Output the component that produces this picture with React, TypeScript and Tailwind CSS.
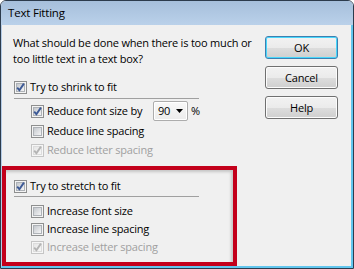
import React from "react";

type BoxProps = { checked?: boolean; disabled?: boolean };

// Win7-style checkbox, 13x13
function Box({ checked, disabled }: BoxProps) {
  return (
    <div
      className={`relative w-[13px] h-[13px] shrink-0 border p-px ${
        disabled ? "border-[#c5c5c5] bg-[#f6f6f6]" : "border-[#8e8f8f] bg-[#f4f4f4]"
      }`}
    >
      <div
        className={`w-full h-full border ${
          disabled
            ? "border-[#dcdcdc] bg-gradient-to-br from-[#e6e6e6] to-[#f7f7f7]"
            : "border-[#aeb2b7] bg-gradient-to-br from-[#c4c8cd] to-[#f5f5f6]"
        }`}
      />
      {checked && (
        <svg className="absolute -left-px -top-px" width="13" height="13" viewBox="0 0 13 13">
          <path
            d="M3.2 6.6 L5.4 9.2 L9.9 2.6"
            fill="none"
            stroke={disabled ? "#b4b4b4" : "#3d5a96"}
            strokeWidth="1.9"
          />
        </svg>
      )}
    </div>
  );
}

function Row({
  label,
  checked,
  disabled,
  className = "",
}: BoxProps & { label: string; className?: string }) {
  return (
    <div className={`flex items-center ${className}`}>
      <Box checked={checked} disabled={disabled} />
      <span className={`ml-[3px] ${disabled ? "text-[#a0a0a0]" : "text-black"}`}>{label}</span>
    </div>
  );
}

function Btn({ label, primary }: { label: string; primary?: boolean }) {
  return (
    <div
      className={`h-[23px] w-[73px] rounded-[3px] border flex items-center justify-center text-black ${
        primary
          ? "border-[#3c7fb1] shadow-[inset_0_0_0_1px_#48d7fb]"
          : "border-[#707070] shadow-[inset_0_0_0_1px_#fcfcfc]"
      } bg-[linear-gradient(#f2f2f2_0%,#ebebeb_50%,#dddddd_51%,#cfcfcf_100%)]`}
    >
      {label}
    </div>
  );
}

export default function App() {
  return (
    <div
      className="w-[354px] h-[269px] flex flex-col rounded-t-[6px] border border-[#2c3b4c] overflow-hidden text-[11px] leading-[16px] tracking-[-0.2px] whitespace-nowrap"
      style={{ fontFamily: '"Open Sans", "Noto Sans", sans-serif' }}
    >
      {/* title bar */}
      <div className="h-[24px] shrink-0 flex items-center pl-[7px] text-[11.5px] text-black bg-gradient-to-b from-[#a6bfdb] to-[#bad1ea]">
        Text Fitting
      </div>

      {/* client area */}
      <div className="flex-1 flex bg-[#f0f0f0] border-l border-l-[#b4cbe6] border-r-2 border-r-[#62c6ee] border-b-2 border-b-[#62c6ee]">
        {/* left column */}
        <div className="w-[235px] shrink-0 flex flex-col">
          <div className="mt-[10px] pl-[11px] text-black">
            What should be done when there is too much or
            <br />
            too little text in a text box?
          </div>

          <Row label="Try to shrink to fit" checked className="mt-[11px] h-[18px] pl-[12px]" />
          <div className="mt-[2px] ml-[12px] w-[185px] h-px bg-[#a0a0a0]" />

          <div className="mt-[2px] h-[20px] pl-[29px] flex items-center">
            <Box checked />
            <span className="ml-[3px] w-[106px] text-black">Reduce font size by</span>
            <div className="w-[35px] h-[20px] flex items-center rounded-[2px] border border-[#acacac] bg-gradient-to-b from-[#f8f8f8] to-[#ececec] shadow-[inset_0_0_0_1px_#ffffff]">
              <span className="pl-[4px] flex-1 text-black">90</span>
              <svg className="mr-[4px]" width="7" height="4" viewBox="0 0 7 4">
                <path d="M0 0 H7 L3.5 4 Z" fill="#000" />
              </svg>
            </div>
            <span className="ml-[3px] text-black">%</span>
          </div>
          <Row label="Reduce line spacing" className="mt-px h-[18px] pl-[29px]" />
          <Row label="Reduce letter spacing" checked disabled className="mt-px h-[18px] pl-[29px]" />

          {/* highlighted group */}
          <div className="mt-[7px] flex-1 flex flex-col border-4 border-[#c3001b] shadow-[inset_-2px_2px_3px_rgba(0,0,0,0.18)]">
            <Row label="Try to stretch to fit" checked className="mt-[7px] h-[18px] pl-[8px]" />
            <div className="mt-px ml-[8px] w-[185px] h-px bg-[#a0a0a0]" />
            <Row label="Increase font size" className="mt-[5px] h-[18px] pl-[25px]" />
            <Row label="Increase line spacing" className="h-[18px] pl-[25px]" />
            <Row label="Increase letter spacing" checked disabled className="h-[18px] pl-[25px]" />
          </div>
        </div>

        {/* buttons */}
        <div className="ml-[28px] pt-[11px] flex flex-col gap-[7px]">
          <Btn label="OK" primary />
          <Btn label="Cancel" />
          <Btn label="Help" />
        </div>
      </div>
    </div>
  );
}
